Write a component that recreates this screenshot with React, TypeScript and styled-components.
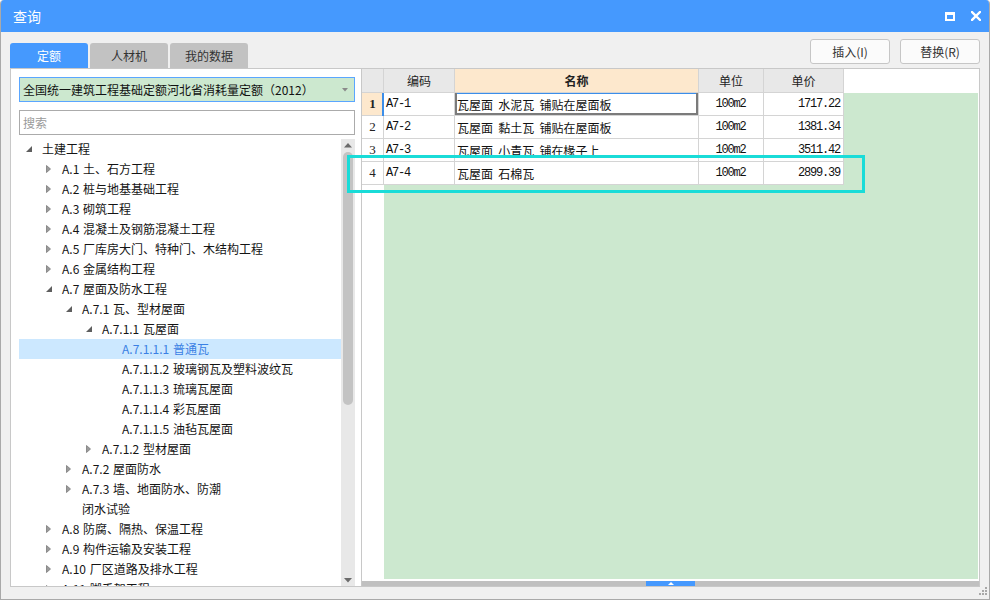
import React from "react";
import styled, { createGlobalStyle } from "styled-components";

const BLUE = "#4599fe";
const GREEN = "#cce8cf";
const PEACH = "#fde8cd";
const LINE = "#d4d4d4";
const CJK = `"Noto Sans CJK SC", "Noto Sans", sans-serif`;
const MONO = `"Liberation Mono", "DejaVu Sans Mono", monospace`;

const GlobalStyle = createGlobalStyle`
  html, body { margin: 0; padding: 0; background: #fff; }
  body { font-family: ${CJK}; }
  * { box-sizing: border-box; }
`;

const Window = styled.div`
  position: relative;
  width: 990px;
  height: 600px;
  display: flex;
  flex-direction: column;
  background: #f0f0f0;
  border: 1px solid #a9a9a9;
  border-top: 0;
  border-radius: 4px 4px 0 0;
  overflow: hidden;
  font-family: ${CJK};
  font-size: 12px;
  color: #1a1a1a;
`;

const TitleBar = styled.div`
  height: 32px;
  flex: none;
  display: flex;
  align-items: center;
  padding: 0 8px 0 12px;
  background: ${BLUE};
  color: #fff;
  font-size: 14px;
`;

const TitleText = styled.span`
  flex: 1;
`;

const TitleButtons = styled.div`
  display: flex;
  align-items: center;
  gap: 16px;
`;

const TopRow = styled.div`
  height: 36px;
  flex: none;
  display: flex;
  align-items: flex-end;
  padding: 0 9px;
`;

const Tabs = styled.div`
  display: flex;
  gap: 2px;
`;

const Tab = styled.div<{ $active?: boolean }>`
  width: 78px;
  height: 25px;
  display: flex;
  align-items: center;
  justify-content: center;
  border-radius: 3px 3px 0 0;
  background: ${(p) => (p.$active ? BLUE : "#c2c2c2")};
  color: ${(p) => (p.$active ? "#fff" : "#333")};
  font-size: 12px;
`;

const Buttons = styled.div`
  margin-left: auto;
  align-self: flex-start;
  margin-top: 7px;
  display: flex;
  gap: 10px;
`;

const Button = styled.div`
  width: 80px;
  height: 25px;
  display: flex;
  align-items: center;
  justify-content: center;
  background: #fbfbfb;
  border: 1px solid #c6c6c6;
  border-radius: 3px;
  color: #333;
  font-size: 12px;
`;

const Main = styled.div`
  flex: 1;
  display: flex;
  margin: 0 9px 12px;
  min-height: 0;
`;

const LeftPanel = styled.div`
  width: 352px;
  flex: none;
  display: flex;
  flex-direction: column;
  background: #fff;
  border: 1px solid #c8c8c8;
  padding: 8px 6px 0 8px;
`;

const Dropdown = styled.div`
  height: 25px;
  flex: none;
  display: flex;
  align-items: center;
  padding: 0 6px 0 3px;
  background: ${GREEN};
  border: 1px solid #5aa6ff;
  font-size: 12px;
  color: #111;
`;

const DropdownText = styled.span`
  flex: 1;
`;

const SearchBox = styled.div`
  height: 25px;
  flex: none;
  margin-top: 8px;
  display: flex;
  align-items: center;
  padding: 0 3px;
  border: 1px solid #ababab;
  color: #9a9a9a;
  font-size: 12px;
`;

const TreeArea = styled.div`
  flex: 1;
  min-height: 0;
  margin-top: 4px;
  display: flex;
`;

const TreeList = styled.div`
  flex: 1;
  overflow: hidden;
`;

const TreeRow = styled.div<{ $level: number; $selected?: boolean }>`
  display: flex;
  align-items: flex-start;
  padding-left: ${(p) => 7 + p.$level * 20}px;
  line-height: 20px;
  background: ${(p) => (p.$selected ? "#cce8ff" : "transparent")};
  color: ${(p) => (p.$selected ? "#3a80e4" : "#141414")};
  white-space: pre-line;
  word-spacing: 1px;
`;

const ArrowBox = styled.span`
  width: 16px;
  height: 20px;
  flex: none;
  display: flex;
  align-items: center;
`;

const VScroll = styled.div`
  width: 14px;
  flex: none;
  display: flex;
  flex-direction: column;
  align-items: center;
  background: #e8e8e8;
`;

const ScrollArrow = styled.div<{ $h: number }>`
  height: ${(p) => p.$h}px;
  flex: none;
  display: flex;
  align-items: center;
  justify-content: center;
`;

const VThumb = styled.div`
  width: 10px;
  height: 253px;
  flex: none;
  border-radius: 5px;
  background: #c3c3c3;
`;

const Spacer = styled.div`
  flex: 1;
`;

const RightPanel = styled.div`
  flex: 1;
  display: flex;
  flex-direction: column;
  background: #fff;
  border: 1px solid #c8c8c8;
  border-left: 0;
  min-width: 0;
`;

const HeaderRow = styled.div`
  height: 24px;
  flex: none;
  display: flex;
`;

const HeaderCell = styled.div<{ $width: number; $hot?: boolean }>`
  width: ${(p) => p.$width}px;
  flex: none;
  display: flex;
  align-items: center;
  justify-content: center;
  background: ${(p) => (p.$hot ? PEACH : "#e8e8e8")};
  border-right: 1px solid ${LINE};
  border-bottom: 1px solid ${LINE};
  font-size: 12px;
  font-weight: ${(p) => (p.$hot ? 700 : 400)};
  color: #222;
`;

const HeaderFiller = styled.div`
  flex: 1;
  background: #fff;
`;

const GridBody = styled.div`
  flex: 1;
  display: flex;
  min-height: 0;
`;

const RowHeads = styled.div`
  width: 22px;
  flex: none;
  background: #fff;
`;

const RowHead = styled.div<{ $current?: boolean }>`
  height: 23px;
  display: flex;
  align-items: center;
  justify-content: center;
  background: ${(p) => (p.$current ? PEACH : "#fff")};
  border-right: 1px solid ${LINE};
  border-bottom: 1px solid ${LINE};
  font-family: "Liberation Serif", serif;
  font-size: 13px;
  font-weight: ${(p) => (p.$current ? 700 : 400)};
  color: #222;
`;

const DataArea = styled.div`
  flex: 1;
  background: ${GREEN};
  margin-right: 1px;
`;

const DataRow = styled.div`
  display: flex;
`;

const Cell = styled.div<{
  $width: number;
  $align: "left" | "center" | "right";
  $mono?: boolean;
  $mark?: boolean;
  $focus?: boolean;
}>`
  width: ${(p) => p.$width}px;
  height: 23px;
  flex: none;
  display: flex;
  align-items: center;
  justify-content: ${(p) =>
    p.$align === "left" ? "flex-start" : p.$align === "right" ? "flex-end" : "center"};
  padding: 0 3px 0 2px;
  background: #fff;
  border-right: 1px solid ${LINE};
  border-bottom: 1px solid ${LINE};
  font-family: ${(p) => (p.$mono ? MONO : CJK)};
  font-size: 12px;
  letter-spacing: ${(p) => (p.$mono ? "-1.2px" : "0")};
  word-spacing: 2.5px;
  white-space: pre;
  color: #111;
  box-shadow: ${(p) =>
    p.$focus
      ? "inset 2px 0 0 #7b7b7b, inset -2px -2px 0 #7b7b7b, inset 0 1px 0 #3b8eea"
      : p.$mark
      ? "-2px 0 0 #3b8eea"
      : "none"};
`;

const HScroll = styled.div`
  height: 5px;
  flex: none;
  margin-top: 2px;
  display: flex;
  justify-content: center;
  background: #c0c0c0;
`;

const HThumb = styled.div`
  width: 49px;
  display: flex;
  align-items: center;
  justify-content: center;
  background: ${BLUE};
`;

const Annotation = styled.div`
  position: absolute;
  left: 346px;
  top: 155px;
  width: 518px;
  height: 38px;
  border: 3px solid #19dcd8;
  pointer-events: none;
`;

const Grip = styled.svg`
  position: absolute;
  right: 1px;
  bottom: 3px;
`;

type TreeNode = {
  level: number;
  label: string;
  state: "open" | "closed" | "leaf";
  selected?: boolean;
};

const tree: TreeNode[] = [
  { level: 0, label: "土建工程", state: "open" },
  { level: 1, label: "A.1 土、石方工程", state: "closed" },
  { level: 1, label: "A.2 桩与地基基础工程", state: "closed" },
  { level: 1, label: "A.3 砌筑工程", state: "closed" },
  { level: 1, label: "A.4 混凝土及钢筋混凝土工程", state: "closed" },
  { level: 1, label: "A.5 厂库房大门、特种门、木结构工程", state: "closed" },
  { level: 1, label: "A.6 金属结构工程", state: "closed" },
  { level: 1, label: "A.7 屋面及防水工程", state: "open" },
  { level: 2, label: "A.7.1 瓦、型材屋面", state: "open" },
  { level: 3, label: "A.7.1.1 瓦屋面", state: "open" },
  { level: 4, label: "A.7.1.1.1 普通瓦", state: "leaf", selected: true },
  { level: 4, label: "A.7.1.1.2 玻璃钢瓦及塑料波纹瓦", state: "leaf" },
  { level: 4, label: "A.7.1.1.3 琉璃瓦屋面", state: "leaf" },
  { level: 4, label: "A.7.1.1.4 彩瓦屋面", state: "leaf" },
  { level: 4, label: "A.7.1.1.5 油毡瓦屋面", state: "leaf" },
  { level: 3, label: "A.7.1.2 型材屋面", state: "closed" },
  { level: 2, label: "A.7.2 屋面防水", state: "closed" },
  { level: 2, label: "A.7.3 墙、地面防水、防潮\n闭水试验", state: "closed" },
  { level: 1, label: "A.8 防腐、隔热、保温工程", state: "closed" },
  { level: 1, label: "A.9 构件运输及安装工程", state: "closed" },
  { level: 1, label: "A.10 厂区道路及排水工程", state: "closed" },
  { level: 1, label: "A.11 脚手架工程", state: "closed" },
];

type Col = { key: "code" | "name" | "unit" | "price"; title: string; width: number; align: "left" | "center" | "right"; mono: boolean };

const cols: Col[] = [
  { key: "code", title: "编码", width: 71, align: "left", mono: true },
  { key: "name", title: "名称", width: 244, align: "left", mono: false },
  { key: "unit", title: "单位", width: 65, align: "center", mono: true },
  { key: "price", title: "单价", width: 80, align: "right", mono: true },
];

const rows = [
  { code: "A7-1", name: "瓦屋面 水泥瓦 铺贴在屋面板", unit: "100m2", price: "1717.22" },
  { code: "A7-2", name: "瓦屋面 黏土瓦 铺贴在屋面板", unit: "100m2", price: "1381.34" },
  { code: "A7-3", name: "瓦屋面 小青瓦 铺在椽子上", unit: "100m2", price: "3511.42" },
  { code: "A7-4", name: "瓦屋面 石棉瓦", unit: "100m2", price: "2899.39" },
];

const Expander = ({ state }: { state: TreeNode["state"] }) => {
  if (state === "open")
    return (
      <svg width="6" height="6" viewBox="0 0 6 6">
        <polygon points="6,0 6,6 0,6" fill="#5e5e5e" />
      </svg>
    );
  if (state === "closed")
    return (
      <svg width="5" height="8" viewBox="0 0 5 8">
        <polygon points="0.5,0.5 4.5,4 0.5,7.5" fill="#9a9a9a" stroke="#7a7a7a" strokeWidth="0.8" />
      </svg>
    );
  return null;
};

const App: React.FC = () => {
  return (
    <>
      <GlobalStyle />
      <Window>
        <TitleBar>
          <TitleText>查询</TitleText>
          <TitleButtons>
            <svg width="10" height="9" viewBox="0 0 10 9">
              <rect x="1" y="1.5" width="8" height="6.5" fill="none" stroke="#fff" strokeWidth="2" />
              <rect x="0" y="0" width="10" height="3" fill="#fff" />
            </svg>
            <svg width="10" height="10" viewBox="0 0 10 10">
              <path d="M1 1 L9 9 M9 1 L1 9" stroke="#fff" strokeWidth="2.4" strokeLinecap="square" />
            </svg>
          </TitleButtons>
        </TitleBar>

        <TopRow>
          <Tabs>
            <Tab $active>定额</Tab>
            <Tab>人材机</Tab>
            <Tab>我的数据</Tab>
          </Tabs>
          <Buttons>
            <Button>插入(I)</Button>
            <Button>替换(R)</Button>
          </Buttons>
        </TopRow>

        <Main>
          <LeftPanel>
            <Dropdown>
              <DropdownText>全国统一建筑工程基础定额河北省消耗量定额（2012）</DropdownText>
              <svg width="6" height="4" viewBox="0 0 6 4">
                <polygon points="0,0 6,0 3,3.5" fill="#8a8a8a" />
              </svg>
            </Dropdown>
            <SearchBox>搜索</SearchBox>
            <TreeArea>
              <TreeList>
                {tree.map((n, i) => (
                  <TreeRow key={i} $level={n.level} $selected={n.selected}>
                    <ArrowBox>
                      <Expander state={n.state} />
                    </ArrowBox>
                    <span>{n.label}</span>
                  </TreeRow>
                ))}
              </TreeList>
              <VScroll>
                <ScrollArrow $h={13}>
                  <svg width="8" height="5" viewBox="0 0 8 5">
                    <polygon points="4,0 8,4.5 0,4.5" fill="#6b6b6b" />
                  </svg>
                </ScrollArrow>
                <VThumb />
                <Spacer />
                <ScrollArrow $h={12}>
                  <svg width="8" height="5" viewBox="0 0 8 5">
                    <polygon points="0,0 8,0 4,4.5" fill="#6b6b6b" />
                  </svg>
                </ScrollArrow>
              </VScroll>
            </TreeArea>
          </LeftPanel>

          <RightPanel>
            <HeaderRow>
              <HeaderCell $width={22} />
              {cols.map((c) => (
                <HeaderCell key={c.key} $width={c.width} $hot={c.key === "name"}>
                  {c.title}
                </HeaderCell>
              ))}
              <HeaderFiller />
            </HeaderRow>
            <GridBody>
              <RowHeads>
                {rows.map((_, i) => (
                  <RowHead key={i} $current={i === 0}>
                    {i + 1}
                  </RowHead>
                ))}
              </RowHeads>
              <DataArea>
                {rows.map((r, i) => (
                  <DataRow key={i}>
                    {cols.map((c) => (
                      <Cell
                        key={c.key}
                        $width={c.width}
                        $align={c.align}
                        $mono={c.mono}
                        $mark={i === 0 && c.key === "code"}
                        $focus={i === 0 && c.key === "name"}
                      >
                        {r[c.key]}
                      </Cell>
                    ))}
                  </DataRow>
                ))}
              </DataArea>
            </GridBody>
            <HScroll>
              <HThumb>
                <svg width="6" height="3" viewBox="0 0 6 3">
                  <polygon points="3,0 6,3 0,3" fill="#fff" />
                </svg>
              </HThumb>
            </HScroll>
          </RightPanel>
        </Main>

        <Annotation />
        <Grip width="9" height="9" viewBox="0 0 9 9">
          <rect x="6" y="0" width="2" height="2" fill="#a8a8a8" />
          <rect x="3" y="3" width="2" height="2" fill="#a8a8a8" />
          <rect x="6" y="3" width="2" height="2" fill="#a8a8a8" />
          <rect x="0" y="6" width="2" height="2" fill="#a8a8a8" />
          <rect x="3" y="6" width="2" height="2" fill="#a8a8a8" />
          <rect x="6" y="6" width="2" height="2" fill="#a8a8a8" />
        </Grip>
      </Window>
    </>
  );
};

export default App;
